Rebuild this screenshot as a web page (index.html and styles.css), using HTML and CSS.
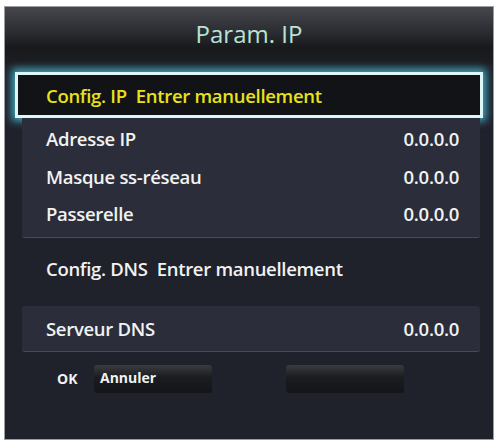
FILE: index.html
```html
<!DOCTYPE html>
<html lang="fr">
<head>
  <meta charset="UTF-8">
  <meta name="viewport" content="width=device-width, initial-scale=1.0">
  <title>Param. IP</title>
<link rel="stylesheet" href="styles.css">
</head>
<body>
<div class="dialog">
    <div class="header">Param. IP</div>
    <div class="content">
        <div class="focus">
            <span>Config. IP</span><span>Entrer manuellement</span>
        </div>
        <div class="panel">
            <div class="row"><span>Adresse IP</span><span>0.0.0.0</span></div>
            <div class="row"><span>Masque ss-réseau</span><span>0.0.0.0</span></div>
            <div class="row"><span>Passerelle</span><span>0.0.0.0</span></div>
        </div>
        <div class="plain">
            <span>Config. DNS</span><span>Entrer manuellement</span>
        </div>
        <div class="panel single">
            <div class="row"><span>Serveur DNS</span><span>0.0.0.0</span></div>
        </div>
        <div class="buttons">
            <span class="ok">OK</span>
            <div class="btn">Annuler</div>
            <div class="btn blank"></div>
        </div>
    </div>
</div>
</body>
</html>
```

FILE: styles.css
```css
body {
    margin: 0;
    background-color: #fff;
    font-family: "Open Sans", sans-serif;
    padding: 6px 4px 0 4px;
}
.dialog {
    width: 488px;
    height: 432px;
    border: 1px solid #9a9ca0;
    background-color: #1f212b;
    display: flex;
    flex-direction: column;
}
.header {
    height: 58px;
    background: linear-gradient(#45474c, #2a2b30 45%, #18191c 70%, #1d1e22);
    color: #b9e3d3;
    font-size: 24px;
    text-align: center;
    line-height: 54px;
}
.content {
    display: flex;
    flex-direction: column;
    padding: 7px 10px 0 10px;
}
.focus {
    height: 40px;
    border: 3px solid #dff6f8;
    background-color: #121316;
    box-shadow: 0 0 8px 3px #45adc2;
    color: #e8e21a;
    font-size: 18.5px;
    font-weight: 600;
    letter-spacing: -0.3px;
    display: flex;
    align-items: center;
    gap: 9px;
    padding-left: 28px;
}
.panel {
    margin: 0 3px 0 7px;
    background-color: #2b2e3a;
    border-bottom: 1px solid #484b56;
    border-radius: 0 0 3px 3px;
    padding: 2px 0 4px 0;
}
.panel.single {
    padding: 0;
    border-radius: 3px;
}
.row {
    height: 37.5px;
    display: flex;
    justify-content: space-between;
    align-items: center;
    padding: 0 21px 0 24px;
    color: #f2f2f2;
    font-size: 18.5px;
    font-weight: 600;
    letter-spacing: -0.3px;
}
.single .row {
    height: 45px;
}
.plain {
    height: 68px;
    box-sizing: border-box;
    padding: 0 0 6px 31px;
    display: flex;
    align-items: center;
    gap: 9px;
    color: #f2f2f2;
    font-size: 18.5px;
    font-weight: 600;
    letter-spacing: -0.3px;
}
.buttons {
    display: flex;
    align-items: center;
    padding: 13px 0 0 42px;
}
.ok {
    color: #f2f2f2;
    font-size: 14px;
    font-weight: 700;
    width: 37px;
}
.btn {
    width: 118px;
    height: 28px;
    border-radius: 3px;
    background: linear-gradient(#3a3b3f, #1b1c1f 45%, #141518);
    color: #f2f2f2;
    font-size: 14px;
    font-weight: 700;
    line-height: 26px;
    padding-left: 6px;
    box-sizing: border-box;
}
.btn.blank {
    margin-left: 74px;
}
```
